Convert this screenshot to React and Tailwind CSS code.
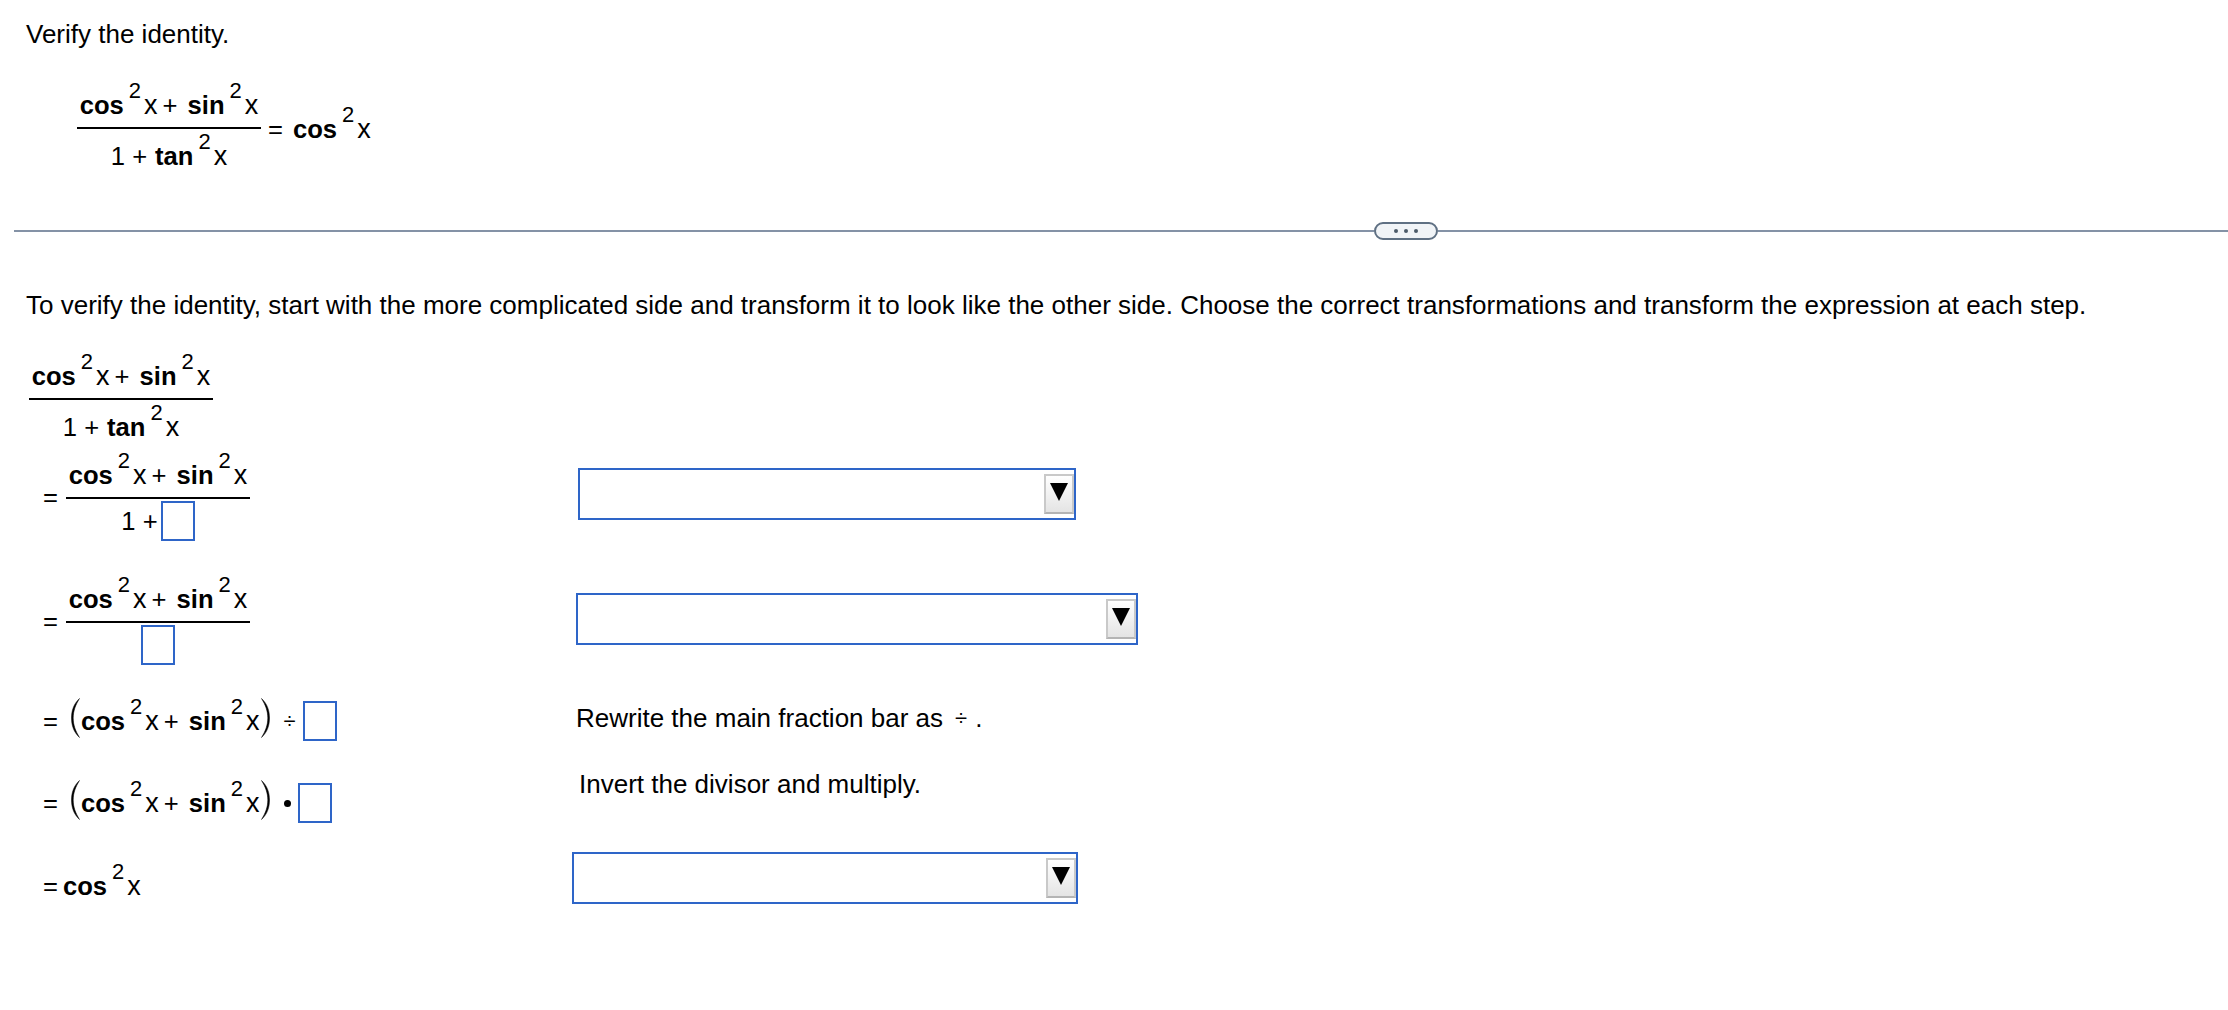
function Sq({ fn }) {
  return (
    <span className="inline-flex items-baseline whitespace-nowrap">
      <span className="font-bold">{fn}</span>
      <span className="ml-[5px] text-[22px] leading-none -translate-y-[16px]">2</span>
      <span className="ml-[3px] text-[27px] leading-none">x</span>
    </span>
  );
}

function SumTerms() {
  return (
    <span className="inline-flex items-baseline whitespace-nowrap">
      <Sq fn="cos" />
      <span className="ml-[5px]">+</span>
      <span className="ml-[10px]">
        <Sq fn="sin" />
      </span>
    </span>
  );
}

function Box({ className = "" }) {
  return <span className={`inline-block w-[34px] h-[40px] border-2 border-[#2e65c8] bg-white ${className}`}></span>;
}

function Arrow() {
  return (
    <div className="w-[30px] h-[40px] flex items-center justify-center border-2 border-[#c9c9c9] border-b-[#b4b4b4] bg-gradient-to-b from-white to-[#e4e4e4]">
      <svg width="18" height="18" viewBox="0 0 18 18" className="mb-[4px]">
        <path d="M0 0H18L9 18Z" fill="#000" />
      </svg>
    </div>
  );
}

function Dropdown({ className }) {
  return (
    <div className={`h-[52px] border-2 border-[#2e65c8] flex items-center justify-end ${className}`}>
      <Arrow />
    </div>
  );
}

function Fraction({ top, bottom, className = "" }) {
  return (
    <div className={`w-[184px] shrink-0 flex flex-col items-center ${className}`}>
      <div className="h-[40px] flex items-end pb-[7px]">{top}</div>
      <div className="w-full h-[2px] bg-black"></div>
      {bottom}
    </div>
  );
}

function TanDenominator() {
  return (
    <div className="pt-[12px] flex items-baseline whitespace-nowrap">
      <span>1 +</span>
      <span className="ml-[8px]"><Sq fn="tan" /></span>
    </div>
  );
}

function Paren({ flip }) {
  return (
    <svg width="11" height="40" viewBox="0 0 11 40" className={`shrink-0 -mt-[6px] ${flip ? "-scale-x-100" : ""}`}>
      <path d="M9.5 0.5C3.5 6 1.5 13 1.5 20C1.5 27 3.5 34 9.5 39.5C5.5 33 3.2 27 3.2 20C3.2 13 5.5 7 9.5 0.5Z" fill="#000" stroke="#000" strokeWidth="0.5" />
    </svg>
  );
}

function Equals({ className = "" }) {
  return <span className={`ml-[43px] w-[15px] shrink-0 ${className}`}>=</span>;
}

export default function App() {
  return (
    <div className="min-h-[1010px] bg-white text-black text-[25.6px] leading-[30px] font-['Liberation_Sans',Arial,sans-serif] overflow-hidden">
      <div className="pl-[26px] pt-[19px] text-[26px]">Verify the identity.</div>

      <div className="ml-[77px] mt-[38px] flex items-start h-[84px]">
        <Fraction top={<SumTerms />} bottom={<TanDenominator />} />
        <span className="ml-[7px] mr-[10px] mt-[27px]">=</span>
        <span className="mt-[27px]"><Sq fn="cos" /></span>
      </div>

      <div className="ml-[14px] mt-[51px] flex items-center h-[18px]">
        <div className="w-[1360px] h-[2px] bg-[#8492a6]"></div>
        <div className="w-[64px] h-[18px] rounded-[9px] border-2 border-[#5f7083] bg-[#f1f4f7] flex items-center justify-center gap-[6px]">
          <span className="w-[4px] h-[4px] rounded-full bg-[#4d5b6a]"></span>
          <span className="w-[4px] h-[4px] rounded-full bg-[#4d5b6a]"></span>
          <span className="w-[4px] h-[4px] rounded-full bg-[#4d5b6a]"></span>
        </div>
        <div className="flex-1 h-[2px] bg-[#8492a6]"></div>
      </div>

      <div className="pl-[26px] mt-[50px] text-[26px] whitespace-nowrap">
        To verify the identity, start with the more complicated side and transform it to look like the other side. Choose the correct transformations and transform the expression at each step.
      </div>

      <div className="ml-[29px] mt-[38px]">
        <Fraction top={<SumTerms />} bottom={<TanDenominator />} />
      </div>

      <div className="flex items-start mt-[15px]">
        <div className="w-[570px] flex items-start">
          <Equals className="mt-[25px]" />
          <Fraction
            className="ml-[8px]"
            top={<SumTerms />}
            bottom={
              <div className="mt-[2px] flex items-center whitespace-nowrap">
                <span>1 +</span>
                <Box className="ml-[3px]" />
              </div>
            }
          />
        </div>
        <Dropdown className="ml-[8px] mt-[11px] w-[498px]" />
      </div>

      <div className="flex items-start mt-[40px]">
        <div className="w-[570px] flex items-start">
          <Equals className="mt-[25px]" />
          <Fraction
            className="ml-[8px]"
            top={<SumTerms />}
            bottom={<Box className="mt-[2px]" />}
          />
        </div>
        <Dropdown className="ml-[6px] mt-[12px] w-[562px]" />
      </div>

      <div className="flex items-center h-[40px] mt-[36px]">
        <div className="w-[570px] flex items-center">
          <Equals />
          <span className="ml-[12px] flex"><Paren /></span>
          <SumTerms />
          <span className="flex"><Paren flip /></span>
          <span className="ml-[13px] text-[22px]">÷</span>
          <Box className="ml-[7px]" />
        </div>
        <div className="ml-[6px] -mt-[6px] text-[26px] flex items-center whitespace-nowrap">
          Rewrite the main fraction bar as<span className="ml-[12px] text-[22px]">÷</span><span className="ml-[8px]">.</span>
        </div>
      </div>

      <div className="flex items-center h-[40px] mt-[42px]">
        <div className="w-[570px] flex items-center">
          <Equals />
          <span className="ml-[12px] flex"><Paren /></span>
          <SumTerms />
          <span className="flex"><Paren flip /></span>
          <span className="ml-[13px] w-[7px] h-[7px] rounded-full bg-black"></span>
          <Box className="ml-[7px]" />
        </div>
        <div className="ml-[9px] -mt-[38px] text-[26px] whitespace-nowrap">Invert the divisor and multiply.</div>
      </div>

      <div className="flex items-start mt-[29px]">
        <div className="w-[570px] flex items-baseline mt-[19px]">
          <Equals />
          <span className="ml-[5px]"><Sq fn="cos" /></span>
        </div>
        <Dropdown className="ml-[2px] w-[506px]" />
      </div>
    </div>
  );
}
